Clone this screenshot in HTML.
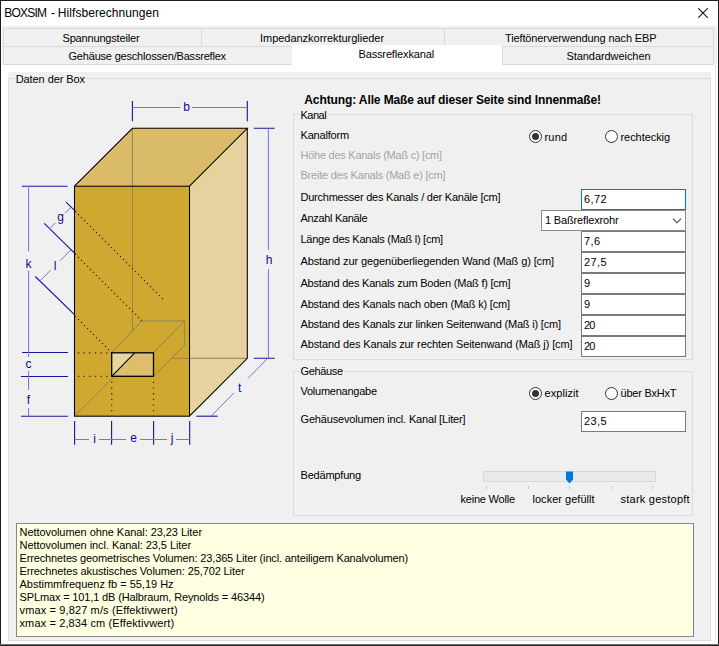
<!DOCTYPE html>
<html><head><meta charset="utf-8"><title>BOXSIM - Hilfsberechnungen</title>
<style>
html,body{margin:0;padding:0;}
body{width:719px;height:646px;position:relative;overflow:hidden;background:#fff;
 font-family:"Liberation Sans",sans-serif;font-size:11px;color:#000;}
div,span,svg{position:absolute;box-sizing:border-box;}
.t{white-space:nowrap;line-height:1;color:#000;}
.dis{color:#a3a3a3;}
.tab{background:#f0f0f0;border:1px solid #d9d9d9;}
.gb{border:1px solid #dcdcdc;}
.inp{background:#fff;border:1px solid #7a7a7a;}
.lblbg{background:#f0f0f0;}
.radio{width:13px;height:13px;border-radius:50%;border:1px solid #333;background:#fff;}
.radio.on::after{content:"";position:absolute;left:2px;top:2px;width:7px;height:7px;border-radius:50%;background:#333;}
.tick{width:1px;height:3px;background:#c4c4c4;top:486px;}

</style></head>
<body>
<!-- window frame -->
<div style="left:0;top:0;width:719px;height:646px;background:#fff;"></div>
<div style="left:0;top:0;width:719px;height:1px;background:#1c1c1c;"></div>
<div style="left:0;top:0;width:1px;height:646px;background:#1c1c1c;"></div>
<div style="left:718px;top:0;width:1px;height:646px;background:#1c1c1c;"></div>
<div style="left:717px;top:1px;width:1px;height:643px;background:#fff;"></div>
<div style="left:0;top:644px;width:719px;height:1px;background:#6a6a6a;"></div>
<div style="left:0;top:645px;width:719px;height:1px;background:#2a2a2a;"></div>
<!-- close button -->
<svg style="left:698px;top:8px" width="10" height="10" viewBox="0 0 10 10"><path d="M0.2 0.2 L9.8 9.8 M9.8 0.2 L0.2 9.8" stroke="#111" stroke-width="1.05" fill="none"/></svg>
<!-- client gray band behind tabs -->
<div style="left:2px;top:26px;width:715px;height:38px;background:#f0f0f0;"></div>
<!-- tabs row 1 -->
<div class="tab" style="left:3px;top:28px;width:199px;height:19px;"></div>
<div class="tab" style="left:201px;top:28px;width:244px;height:19px;"></div>
<div class="tab" style="left:444px;top:28px;width:270px;height:19px;"></div>
<!-- tabs row 2 -->
<div class="tab" style="left:3px;top:46px;width:290px;height:19px;"></div>
<div class="tab" style="left:502px;top:46px;width:212px;height:19px;"></div>
<div style="left:292px;top:45px;width:210px;height:21px;background:#fff;"></div>
<!-- page -->
<div style="left:1px;top:65px;width:717px;height:579px;background:#fff;"></div>
<div style="left:715px;top:65px;width:1px;height:578px;background:#e9e9e9;"></div>
<!-- outer group box -->
<div style="left:8px;top:72px;width:703px;height:569px;background:#f0f0f0;"></div>
<div class="gb" style="left:8px;top:78px;width:703px;height:563px;"></div>
<div class="lblbg" style="left:15px;top:73px;width:71px;height:13px;"></div>
<!-- Kanal group -->
<div class="gb" style="left:293px;top:114px;width:400px;height:246px;"></div>
<div class="lblbg" style="left:299px;top:108px;width:29px;height:13px;"></div>
<!-- Gehäuse group -->
<div class="gb" style="left:293px;top:371px;width:400px;height:145px;"></div>
<div class="lblbg" style="left:299px;top:365px;width:45px;height:13px;"></div>
<!-- radios -->
<div class="radio on" style="left:529px;top:130px;"></div>
<div class="radio" style="left:605px;top:130px;"></div>
<div class="radio on" style="left:529px;top:387px;"></div>
<div class="radio" style="left:605px;top:387px;"></div>
<!-- inputs -->
<div class="inp" style="left:581px;top:189px;width:105px;height:21px;border-color:#0078d7;"></div>
<div class="inp" style="left:541px;top:210px;width:145px;height:21px;border-color:#8c8c8c;"></div>
<svg style="left:672px;top:217px" width="10" height="8" viewBox="0 0 10 8"><path d="M1 1.6 L5 5.8 L9 1.6" stroke="#404040" stroke-width="1.1" fill="none"/></svg>
<div class="inp" style="left:581px;top:231px;width:105px;height:21px;"></div>
<div class="inp" style="left:581px;top:252px;width:105px;height:21px;"></div>
<div class="inp" style="left:581px;top:273px;width:105px;height:21px;"></div>
<div class="inp" style="left:581px;top:294px;width:105px;height:21px;"></div>
<div class="inp" style="left:581px;top:315px;width:105px;height:21px;"></div>
<div class="inp" style="left:581px;top:336px;width:105px;height:21px;"></div>
<div class="inp" style="left:581px;top:411px;width:105px;height:21px;"></div>
<!-- slider -->
<div style="left:483px;top:471px;width:173px;height:11px;background:#e7eaea;border:1px solid #d6d6d6;"></div>
<svg style="left:565px;top:471px" width="9" height="13" viewBox="0 0 9 13"><path d="M1 0.5 H8 V8.5 L4.5 12.5 L1 8.5 Z" fill="#0078d7"/></svg>
<div class="tick" style="left:486px;"></div>
<div class="tick" style="left:528px;"></div>
<div class="tick" style="left:569px;"></div>
<div class="tick" style="left:611px;"></div>
<div class="tick" style="left:652px;"></div>
<!-- info box -->
<div style="left:16px;top:523px;width:678px;height:114px;background:#ffffe1;border:1px solid #828790;"></div>
<svg style="left:0;top:0" width="290" height="460" viewBox="0 0 290 460" shape-rendering="auto">
<!-- faces -->
<polygon points="74.5,186.2 132.4,128.3 247.3,128.3 189.5,186.2" fill="#dabb68"/>
<polygon points="189.5,186.2 247.3,128.3 247.3,358.3 189.5,416.2" fill="#e5d29e"/>
<rect x="74.5" y="186.2" width="115" height="230" fill="#cfa830"/>
<!-- hidden (gray) lines -->
<g stroke="#8f8258" stroke-width="1" fill="none">
<path d="M132.4 128.3 V330.6"/>
<path d="M171.7 358.3 H247.3"/>
<path d="M74.5 416.2 L114.4 376.3"/>
<path d="M111.7 352.8 L141.8 321 H184.4 V345.6 L153.5 376.3"/>
<path d="M153.5 352.8 L184.4 321"/>
</g>
<!-- dotted projection lines -->
<g stroke="#4d1f16" stroke-width="1.25" fill="none" stroke-dasharray="1.3 2.94">
<path d="M75.05 211.15 L163.8 299.9"/>
<path d="M75.05 253.95 L141.8 320.7"/>
<path d="M75.05 316.15 L111.7 352.8"/>
</g>
<g stroke="#4d1f16" stroke-width="1.25" fill="none" stroke-dasharray="1.3 4.35">
<path d="M77.9 352.8 H111"/>
<path d="M77.9 376.3 H111"/>
<path d="M111.7 381.8 V416"/>
<path d="M153.5 381.8 V416"/>
</g>
<!-- channel opening -->
<rect x="111.7" y="352.8" width="41.8" height="23.5" fill="#dcbe6c"/>
<polygon points="111.7,352.8 134.7,352.8 111.7,376.3" fill="#e7d6a3"/>
<path d="M111.7 376.3 L134.7 352.8" stroke="#000" stroke-width="1.1"/>
<rect x="111.7" y="352.8" width="41.8" height="23.5" fill="none" stroke="#000" stroke-width="1.3"/>
<!-- black edges -->
<g stroke="#000" stroke-width="1.05" fill="none" stroke-linejoin="miter">
<rect x="74.5" y="186.2" width="115" height="230"/>
<path d="M74.5 186.2 L132.4 128.3 H247.3 L189.5 186.2"/>
<path d="M247.3 128.3 V358.3 L189.5 416.2"/>
</g>
<!-- dimension ticks (dark blue) -->
<g stroke="#1414a0" stroke-width="1.1" fill="none">
<path d="M132.4 101 V121.3 M247.3 101 V121.3"/>
<path d="M253.8 128.3 H274.7 M253.8 358.3 H274.7"/>
<path d="M196.3 416.2 H217.6"/>
<path d="M22 186.2 H67.6 M22 352.5 H68 M21 376.5 H68 M21 416.3 H68"/>
<path d="M74.6 421 V444.7 M111.6 421 V444.7 M153.6 421 V444.7 M189.7 421 V444.7"/>
<path d="M66 202.1 L75.3 211.2 M44.2 223.4 L75.3 253.8 M35.3 276.5 L75 315.2"/>
</g>
<!-- dimension lines (light blue, thin) -->
<g stroke="#7474e2" stroke-width="1" fill="none">
<path d="M132.4 107.5 H180.5 M191.8 107.5 H247.3"/>
<path d="M268.4 128.3 V250 M268.4 269 V358.3"/>
<path d="M267.7 358.3 L248 378.4 M233.8 393 L211 416.2"/>
<path d="M28.6 186.2 V251.5 M28.6 270.5 V357 M28.6 371 V390 M28.6 408 V416.3"/>
<path d="M74.6 439.5 H89 M99 439.5 H126 M140 439.5 H167 M176 439.5 H189.7"/>
<path d="M71.1 207.2 L65 213.3 M55.5 222.8 L49.3 229"/>
<path d="M70.8 250 L60 260.8 M50.5 270.3 L40.4 280.5"/>
</g>
<g font-family="Liberation Sans, sans-serif" font-size="12" fill="#0c0c8e" text-anchor="middle">
<text x="186.5" y="110.9">b</text>
<text x="269" y="264">h</text>
<text x="28.5" y="268">k</text>
<text x="60.5" y="220.5">g</text>
<text x="55.2" y="270">l</text>
<text x="28.5" y="367.5">c</text>
<text x="28.5" y="404">f</text>
<text x="94.5" y="442.8">i</text>
<text x="133.5" y="442.2">e</text>
<text x="172" y="442.2">j</text>
<text x="239.6" y="392.2">t</text>
</g>
</svg>

<span id="t0" class="t" style="left:4.3px;top:7.40px;font-size:12px;letter-spacing:-0.777px;">BOXSIM</span>
<span id="t1" class="t" style="left:51px;top:7.40px;font-size:12px;letter-spacing:0.000px;">-</span>
<span id="t2" class="t" style="left:57.8px;top:7.40px;font-size:12px;letter-spacing:0.070px;">Hilfsberechnungen</span>
<span id="t3" class="t" style="left:62.5px;top:33.30px;font-size:11px;letter-spacing:-0.173px;">Spannungsteiler</span>
<span id="t4" class="t" style="left:260px;top:33.30px;font-size:11px;letter-spacing:-0.028px;">Impedanzkorrekturglieder</span>
<span id="t5" class="t" style="left:505px;top:33.30px;font-size:11px;letter-spacing:-0.123px;">Tieftönerverwendung nach EBP</span>
<span id="t6" class="t" style="left:68.5px;top:51.30px;font-size:11px;letter-spacing:-0.195px;">Gehäuse geschlossen/Bassreflex</span>
<span id="t7" class="t" style="left:358.5px;top:48.90px;font-size:11px;letter-spacing:-0.147px;">Bassreflexkanal</span>
<span id="t8" class="t" style="left:566.5px;top:51.30px;font-size:11px;letter-spacing:-0.065px;">Standardweichen</span>
<span id="t9" class="t" style="left:15.7px;top:73.90px;font-size:11px;letter-spacing:-0.077px;">Daten der Box</span>
<span id="t10" class="t" style="left:304.3px;top:93.90px;font-size:12px;letter-spacing:-0.110px;font-weight:bold">Achtung: Alle Maße auf dieser Seite sind Innenmaße!</span>
<span id="t11" class="t" style="left:300.5px;top:109.90px;font-size:11px;letter-spacing:-0.510px;">Kanal</span>
<span id="t12" class="t" style="left:300.5px;top:129.90px;font-size:11px;letter-spacing:-0.193px;">Kanalform</span>
<span id="t13" class="t dis" style="left:300.5px;top:149.90px;font-size:11px;letter-spacing:-0.258px;">Höhe des Kanals (Maß c) [cm]</span>
<span id="t14" class="t dis" style="left:300.5px;top:170.40px;font-size:11px;letter-spacing:-0.224px;">Breite des Kanals (Maß e) [cm]</span>
<span id="t15" class="t" style="left:300.5px;top:192.40px;font-size:11px;letter-spacing:-0.231px;">Durchmesser des Kanals / der Kanäle [cm]</span>
<span id="t16" class="t" style="left:300.5px;top:212.90px;font-size:11px;letter-spacing:-0.321px;">Anzahl Kanäle</span>
<span id="t17" class="t" style="left:300.5px;top:233.90px;font-size:11px;letter-spacing:-0.257px;">Länge des Kanals (Maß l) [cm]</span>
<span id="t18" class="t" style="left:300.5px;top:255.90px;font-size:11px;letter-spacing:-0.112px;">Abstand zur gegenüberliegenden Wand (Maß g) [cm]</span>
<span id="t19" class="t" style="left:300.5px;top:278.40px;font-size:11px;letter-spacing:-0.219px;">Abstand des Kanals zum Boden (Maß f) [cm]</span>
<span id="t20" class="t" style="left:300.5px;top:298.90px;font-size:11px;letter-spacing:-0.187px;">Abstand des Kanals nach oben (Maß k) [cm]</span>
<span id="t21" class="t" style="left:300.5px;top:319.40px;font-size:11px;letter-spacing:-0.186px;">Abstand des Kanals zur linken Seitenwand (Maß i) [cm]</span>
<span id="t22" class="t" style="left:300.5px;top:338.90px;font-size:11px;letter-spacing:-0.115px;">Abstand des Kanals zur rechten Seitenwand (Maß j) [cm]</span>
<span id="t23" class="t" style="left:544.5px;top:132.10px;font-size:11px;letter-spacing:0.190px;">rund</span>
<span id="t24" class="t" style="left:620.5px;top:132.10px;font-size:11px;letter-spacing:-0.060px;">rechteckig</span>
<span id="t25" class="t" style="left:584px;top:194.40px;font-size:11px;letter-spacing:0.393px;">6,72</span>
<span id="t26" class="t" style="left:545px;top:215.40px;font-size:11px;letter-spacing:-0.158px;">1 Baßreflexrohr</span>
<span id="t27" class="t" style="left:584px;top:236.40px;font-size:11px;letter-spacing:0.402px;">7,6</span>
<span id="t28" class="t" style="left:584px;top:257.40px;font-size:11px;letter-spacing:0.393px;">27,5</span>
<span id="t29" class="t" style="left:584px;top:278.40px;font-size:11px;letter-spacing:0.000px;">9</span>
<span id="t30" class="t" style="left:584px;top:299.40px;font-size:11px;letter-spacing:0.000px;">9</span>
<span id="t31" class="t" style="left:584px;top:320.40px;font-size:11px;letter-spacing:-0.850px;">20</span>
<span id="t32" class="t" style="left:584px;top:341.40px;font-size:11px;letter-spacing:-0.850px;">20</span>
<span id="t33" class="t" style="left:300.5px;top:365.90px;font-size:11px;letter-spacing:-0.343px;">Gehäuse</span>
<span id="t34" class="t" style="left:300.5px;top:385.90px;font-size:11px;letter-spacing:-0.243px;">Volumenangabe</span>
<span id="t35" class="t" style="left:544.5px;top:387.90px;font-size:11px;letter-spacing:0.068px;">explizit</span>
<span id="t36" class="t" style="left:620.5px;top:387.90px;font-size:11px;letter-spacing:-0.220px;">über BxHxT</span>
<span id="t37" class="t" style="left:300.5px;top:414.20px;font-size:11px;letter-spacing:-0.167px;">Gehäusevolumen incl. Kanal [Liter]</span>
<span id="t38" class="t" style="left:584px;top:416.40px;font-size:11px;letter-spacing:0.393px;">23,5</span>
<span id="t39" class="t" style="left:300.5px;top:469.90px;font-size:11px;letter-spacing:-0.199px;">Bedämpfung</span>
<span id="t40" class="t" style="left:460.5px;top:494.40px;font-size:11px;letter-spacing:-0.207px;">keine Wolle</span>
<span id="t41" class="t" style="left:532.5px;top:494.40px;font-size:11px;letter-spacing:0.026px;">locker gefüllt</span>
<span id="t42" class="t" style="left:620.5px;top:494.40px;font-size:11px;letter-spacing:0.235px;">stark gestopft</span>
<span id="t43" class="t" style="left:19.5px;top:527.40px;font-size:11px;letter-spacing:-0.060px;">Nettovolumen ohne Kanal: 23,23 Liter</span>
<span id="t44" class="t" style="left:19.5px;top:540.40px;font-size:11px;letter-spacing:-0.059px;">Nettovolumen incl. Kanal: 23,5 Liter</span>
<span id="t45" class="t" style="left:19.5px;top:553.40px;font-size:11px;letter-spacing:-0.145px;">Errechnetes geometrisches Volumen: 23,365 Liter (incl. anteiligem Kanalvolumen)</span>
<span id="t46" class="t" style="left:19.5px;top:566.40px;font-size:11px;letter-spacing:-0.110px;">Errechnetes akustisches Volumen: 25,702 Liter</span>
<span id="t47" class="t" style="left:19.5px;top:579.40px;font-size:11px;letter-spacing:-0.010px;">Abstimmfrequenz fb = 55,19 Hz</span>
<span id="t48" class="t" style="left:19.5px;top:592.40px;font-size:11px;letter-spacing:-0.138px;">SPLmax = 101,1 dB (Halbraum, Reynolds = 46344)</span>
<span id="t49" class="t" style="left:19.5px;top:605.40px;font-size:11px;letter-spacing:0.131px;">vmax = 9,827 m/s (Effektivwert)</span>
<span id="t50" class="t" style="left:19.5px;top:618.40px;font-size:11px;letter-spacing:0.120px;">xmax = 2,834 cm (Effektivwert)</span>

</body></html>
